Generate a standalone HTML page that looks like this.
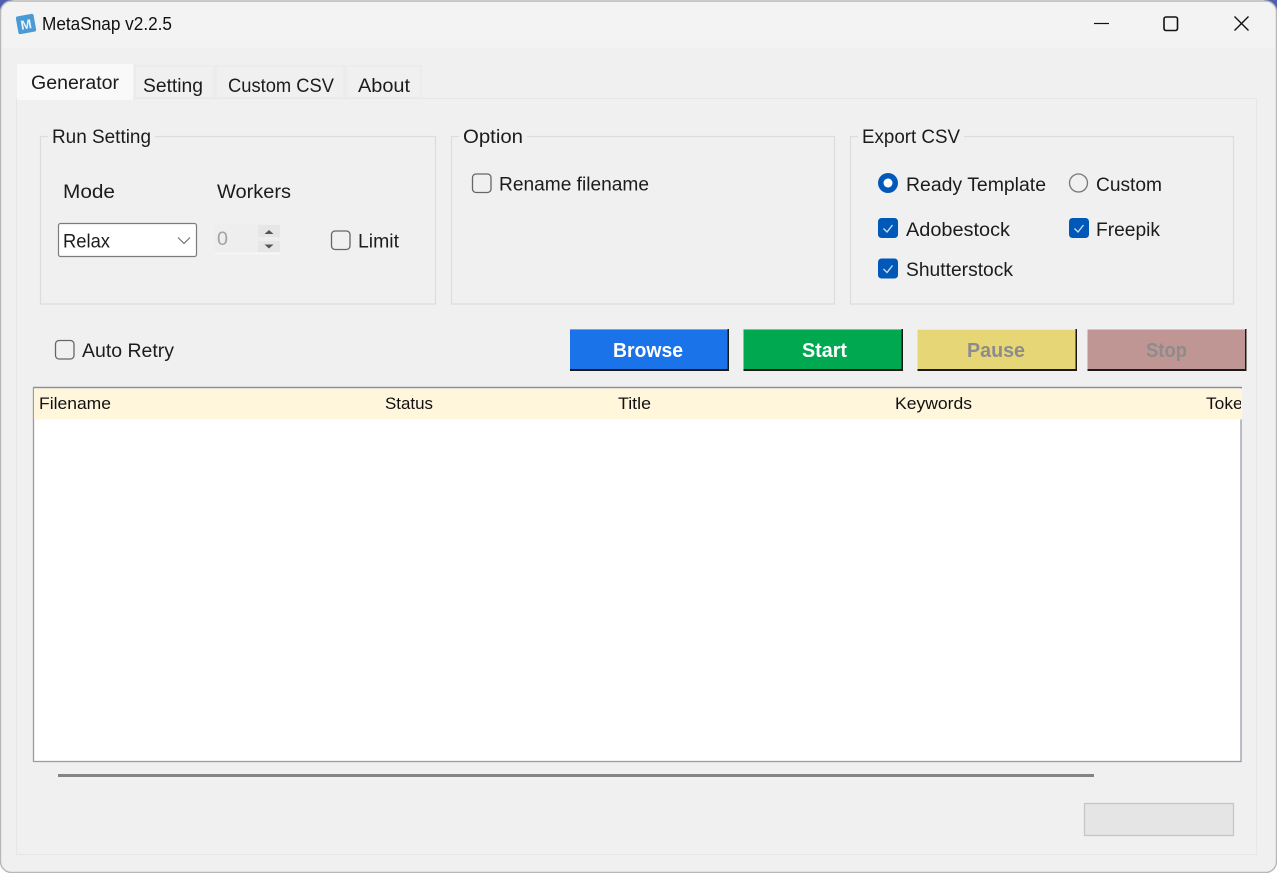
<!DOCTYPE html>
<html lang="en">
<head>
<meta charset="utf-8">
<title>MetaSnap v2.2.5</title>
<style>
html,body{margin:0;padding:0;width:1277px;height:873px;overflow:hidden;background:#fff}
svg{display:block}
text{font-family:"Liberation Sans",sans-serif;font-size:19px;fill:#1c1c1c}
.h{font-size:17px;fill:#111}
.b{font-weight:bold;font-size:20px;fill:#fff}
.d{fill:#8c8c8c}
</style>
</head>
<body>
<svg width="1277" height="873" viewBox="0 0 1277 873" xmlns="http://www.w3.org/2000/svg">
<defs><clipPath id="c"><rect x="34" y="388" width="1207" height="32"/></clipPath></defs>
<rect width="1277" height="873" fill="#fff"/>
<path d="M0 0H14Q2 2 0 14Z" fill="#4f5fae"/>
<path d="M1277 0H1263Q1275 2 1277 14Z" fill="#4f5fae"/>
<rect x="0.5" y="1" width="1276" height="871.5" rx="11" fill="#f0f0f0" stroke="#b8b8b8" stroke-width="1.4"/>
<path d="M2 48V13Q2 2 13 2H1264Q1275 2 1275 13V48Z" fill="#f3f3f3"/>

<!-- title bar -->
<g transform="rotate(-10 26 24)">
<rect x="17" y="15" width="18" height="18" rx="2" fill="#4b9ad6"/>
<text x="20.5" y="29" style="font-size:13px;font-weight:bold;fill:#e8f4fc" textLength="11" lengthAdjust="spacingAndGlyphs">M</text>
</g>
<text x="42" y="30" style="font-size:18px;fill:#111" textLength="130" lengthAdjust="spacingAndGlyphs">MetaSnap v2.2.5</text>
<path d="M1094 23.500H1109" stroke="#111" stroke-width="1.2" fill="none"/>
<rect x="1164" y="17" width="13.500" height="13.500" rx="2" stroke="#111" stroke-width="1.600" fill="none"/>
<path d="M1234.500 16.500L1248.500 30.500M1248.500 16.500L1234.500 30.500" stroke="#111" stroke-width="1.400" fill="none"/>

<!-- tab pane -->
<rect x="16.500" y="98.500" width="1240" height="756" fill="#f0f0f0" stroke="#e6e6e6"/>
<rect x="135" y="66" width="79" height="32" fill="#f0f0f0" stroke="#e9e9e9"/>
<rect x="216" y="66" width="128" height="32" fill="#f0f0f0" stroke="#e9e9e9"/>
<rect x="346" y="66" width="75" height="32" fill="#f0f0f0" stroke="#e9e9e9"/>
<rect x="17" y="64" width="116" height="36" fill="#f9f9f9"/>
<text x="31" y="89" textLength="88" lengthAdjust="spacingAndGlyphs">Generator</text>
<text x="143" y="92" textLength="60" lengthAdjust="spacingAndGlyphs">Setting</text>
<text x="228" y="92" textLength="106" lengthAdjust="spacingAndGlyphs">Custom CSV</text>
<text x="358" y="92" textLength="52" lengthAdjust="spacingAndGlyphs">About</text>

<!-- group boxes -->
<rect x="40.500" y="136.500" width="395" height="167.500" fill="none" stroke="#dcdcdc" stroke-width="1.200"/>
<rect x="48" y="128" width="107" height="16" fill="#f0f0f0"/>
<text x="52" y="143" textLength="99" lengthAdjust="spacingAndGlyphs">Run Setting</text>
<rect x="451.500" y="136.500" width="383" height="167.500" fill="none" stroke="#dcdcdc" stroke-width="1.200"/>
<rect x="459" y="128" width="68" height="16" fill="#f0f0f0"/>
<text x="463" y="143" textLength="60" lengthAdjust="spacingAndGlyphs">Option</text>
<rect x="850.500" y="136.500" width="383" height="167.500" fill="none" stroke="#dcdcdc" stroke-width="1.200"/>
<rect x="858" y="128" width="106" height="16" fill="#f0f0f0"/>
<text x="862" y="143" textLength="98" lengthAdjust="spacingAndGlyphs">Export CSV</text>

<!-- run setting -->
<text x="63" y="198" textLength="52" lengthAdjust="spacingAndGlyphs">Mode</text>
<text x="217" y="198" textLength="74" lengthAdjust="spacingAndGlyphs">Workers</text>
<rect x="58.500" y="223.500" width="138" height="33" rx="2" fill="#fff" stroke="#7c7c7c" stroke-width="1.200"/>
<text x="63" y="247.500" textLength="47" lengthAdjust="spacingAndGlyphs">Relax</text>
<path d="M178 237.500L184 243.500L190 237.500" stroke="#666" stroke-width="1.100" fill="none"/>
<rect x="215" y="224" width="65" height="29" fill="#eeeeee"/>
<path d="M215 253.500H280" stroke="#f8f8f8" stroke-width="1.400"/>
<text x="217" y="245" style="fill:#a2a2a2" textLength="11" lengthAdjust="spacingAndGlyphs">0</text>
<rect x="258" y="225" width="22" height="12" fill="#e6e6e6"/>
<rect x="258" y="241" width="22" height="11" fill="#e6e6e6"/>
<path d="M264.500 234H273.500L269 230Z" fill="#555"/>
<path d="M264.500 244.500H273.500L269 248.500Z" fill="#555"/>
<rect x="331.500" y="231" width="18.500" height="18.500" rx="3.500" fill="#f0f0f0" stroke="#666" stroke-width="1.300"/>
<text x="358" y="247.500" textLength="41" lengthAdjust="spacingAndGlyphs">Limit</text>

<!-- option -->
<rect x="472.500" y="174" width="18.500" height="18.500" rx="3.500" fill="#f0f0f0" stroke="#666" stroke-width="1.300"/>
<text x="499" y="190.500" textLength="150" lengthAdjust="spacingAndGlyphs">Rename filename</text>

<!-- export csv -->
<circle cx="888" cy="183" r="10" fill="#0058b8"/>
<circle cx="888" cy="183" r="4.500" fill="#fff"/>
<text x="906" y="191" textLength="140" lengthAdjust="spacingAndGlyphs">Ready Template</text>
<circle cx="1078.500" cy="183" r="9" fill="#f0f0f0" stroke="#777" stroke-width="1.300"/>
<text x="1096" y="191" textLength="66" lengthAdjust="spacingAndGlyphs">Custom</text>
<rect x="878" y="218" width="20" height="20" rx="3.500" fill="#0058b8"/>
<path d="M883.500 228.500L887 232L892.500 225" stroke="#c9dcf0" stroke-width="1.400" fill="none"/>
<text x="906" y="236" textLength="104" lengthAdjust="spacingAndGlyphs">Adobestock</text>
<rect x="1069" y="218" width="20" height="20" rx="3.500" fill="#0058b8"/>
<path d="M1074.500 228.500L1078 232L1083.500 225" stroke="#c9dcf0" stroke-width="1.400" fill="none"/>
<text x="1096" y="236" textLength="64" lengthAdjust="spacingAndGlyphs">Freepik</text>
<rect x="878" y="258.500" width="20" height="20" rx="3.500" fill="#0058b8"/>
<path d="M883.500 269L887 272.500L892.500 265.500" stroke="#c9dcf0" stroke-width="1.400" fill="none"/>
<text x="906" y="276" textLength="107" lengthAdjust="spacingAndGlyphs">Shutterstock</text>

<!-- auto retry -->
<rect x="55.500" y="340.500" width="18.500" height="18.500" rx="3.500" fill="#f0f0f0" stroke="#666" stroke-width="1.300"/>
<text x="82" y="357" textLength="92" lengthAdjust="spacingAndGlyphs">Auto Retry</text>

<!-- buttons -->
<rect x="570" y="329" width="159" height="42" fill="#1a1a1a"/>
<rect x="570" y="329" width="157.500" height="40" fill="#1a73e8"/>
<rect x="570" y="329" width="157.500" height="1" fill="#6aa5f0"/>
<text class="b" x="613" y="357" textLength="70" lengthAdjust="spacingAndGlyphs">Browse</text>
<rect x="743.500" y="329" width="159.500" height="42" fill="#1a1a1a"/>
<rect x="743.500" y="329" width="158" height="40" fill="#00a84f"/>
<rect x="743.500" y="329" width="158" height="1" fill="#66cc95"/>
<text class="b" x="802" y="357" textLength="45" lengthAdjust="spacingAndGlyphs">Start</text>
<rect x="917.500" y="329" width="159.500" height="42" fill="#1a1a1a"/>
<rect x="917.500" y="329" width="158" height="40" fill="#e6d676"/>
<rect x="917.500" y="329" width="158" height="1" fill="#f5ecb0"/>
<text class="b d" x="967" y="357" textLength="58" lengthAdjust="spacingAndGlyphs">Pause</text>
<rect x="1087.500" y="329" width="159" height="42" fill="#1a1a1a"/>
<rect x="1087.500" y="329" width="157.500" height="40" fill="#c09694"/>
<rect x="1087.500" y="329" width="157.500" height="1" fill="#e0c0be"/>
<text class="b d" x="1146" y="357" textLength="41" lengthAdjust="spacingAndGlyphs">Stop</text>

<!-- table -->
<rect x="33.500" y="387.500" width="1207.500" height="374" fill="#fff" stroke="#9a9aaa" stroke-width="1.300"/>
<rect x="34" y="388.500" width="1208" height="31" fill="#fff6dc"/>
<path d="M34 387.500H1242" stroke="#8e8e8e" stroke-width="1.300"/>
<g clip-path="url(#c)">
<text class="h" x="39" y="409" textLength="72" lengthAdjust="spacingAndGlyphs">Filename</text>
<text class="h" x="385" y="409" textLength="48" lengthAdjust="spacingAndGlyphs">Status</text>
<text class="h" x="618" y="409" textLength="33" lengthAdjust="spacingAndGlyphs">Title</text>
<text class="h" x="895" y="409" textLength="77" lengthAdjust="spacingAndGlyphs">Keywords</text>
<text class="h" x="1206" y="409" textLength="55" lengthAdjust="spacingAndGlyphs">Tokens</text>
</g>

<!-- scrollbar -->
<rect x="58" y="774" width="1036" height="3" fill="#848484"/>

<!-- progress box -->
<rect x="1084.500" y="803.500" width="149" height="32" fill="#e5e5e5" stroke="#c6c6c6" stroke-width="1.300"/>
</svg>
</body>
</html>
